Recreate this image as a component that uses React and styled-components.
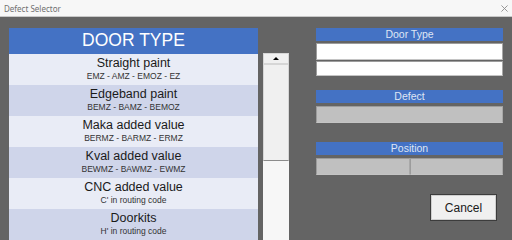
import styled, { createGlobalStyle } from "styled-components";

const GlobalStyle = createGlobalStyle`
  html, body {
    margin: 0;
    padding: 0;
    background: #646464;
    font-family: "Liberation Sans", Arial, sans-serif;
    overflow: hidden;
  }
`;

const doorTypes = [
  { name: "Straight paint", codes: "EMZ - AMZ - EMOZ - EZ" },
  { name: "Edgeband paint", codes: "BEMZ - BAMZ - BEMOZ" },
  { name: "Maka added value", codes: "BERMZ - BARMZ - ERMZ" },
  { name: "Kval added value", codes: "BEWMZ - BAWMZ - EWMZ" },
  { name: "CNC added value", codes: "C' in routing code" },
  { name: "Doorkits", codes: "H' in routing code" },
];

function App() {
  return (
    <>
      <GlobalStyle />
      <Window>
        <TitleBar>
          <span>Defect Selector</span>
          <CloseIcon viewBox="0 0 8 8">
            <path d="M0.5 0.5 L7.5 7.5 M7.5 0.5 L0.5 7.5" />
          </CloseIcon>
        </TitleBar>
        <Content>
          <List>
            <ListHeader>DOOR TYPE</ListHeader>
            {doorTypes.map((item, i) => (
              <ListRow key={item.name} $alt={i % 2 === 1}>
                <RowTitle>{item.name}</RowTitle>
                <RowCodes>{item.codes}</RowCodes>
              </ListRow>
            ))}
          </List>
          <ScrollBar>
            <ScrollButton>
              <Arrow />
            </ScrollButton>
            <ScrollThumb />
            <ScrollTrack />
          </ScrollBar>
          <SidePanel>
            <Field>
              <FieldHeader>Door Type</FieldHeader>
              <InputBox />
              <InputBox $tight />
            </Field>
            <Field>
              <FieldHeader>Defect</FieldHeader>
              <InputBox $disabled $spaced />
            </Field>
            <Field>
              <FieldHeader>Position</FieldHeader>
              <SplitRow>
                <InputBox $disabled $spaced />
                <InputBox $disabled $spaced />
              </SplitRow>
            </Field>
            <CancelButton>Cancel</CancelButton>
          </SidePanel>
        </Content>
      </Window>
    </>
  );
}

export default App;

const Window = styled.div`
  width: 512px;
  height: 240px;
  display: flex;
  flex-direction: column;
  overflow: hidden;
`;

const TitleBar = styled.div`
  height: 16px;
  flex-shrink: 0;
  background: #f7f7f7;
  border-bottom: 1px solid #c8c8c8;
  display: flex;
  align-items: center;
  justify-content: space-between;
  padding: 0 4px 0 4px;
  span {
    font-family: "Noto Sans", "Liberation Sans", sans-serif;
    font-size: 8px;
    color: #707070;
  }
`;

const CloseIcon = styled.svg`
  width: 7px;
  height: 7px;
  path {
    stroke: #8a8a8a;
    stroke-width: 1;
    fill: none;
  }
`;

const Content = styled.div`
  flex: 1;
  display: flex;
  align-items: flex-start;
  padding: 11px 0 0 9px;
`;

const List = styled.div`
  width: 249px;
  display: flex;
  flex-direction: column;
  flex-shrink: 0;
`;

const ListHeader = styled.div`
  height: 26px;
  background: #4472c4;
  color: #ffffff;
  font-size: 17.5px;
  line-height: 25px;
  text-align: center;
`;

const ListRow = styled.div`
  height: 31px;
  box-sizing: border-box;
  padding-top: 2px;
  background: ${(p) => (p.$alt ? "#cfd5ea" : "#e9ecf6")};
  text-align: center;
  color: #1a1a1a;
`;

const RowTitle = styled.div`
  font-size: 12.5px;
  line-height: 14px;
`;

const RowCodes = styled.div`
  font-size: 8.5px;
  line-height: 12px;
  color: #333333;
`;

const ScrollBar = styled.div`
  width: 26px;
  margin-left: 5px;
  margin-top: 25px;
  display: flex;
  flex-direction: column;
  flex-shrink: 0;
`;

const ScrollButton = styled.div`
  height: 11px;
  box-sizing: border-box;
  background: #f0f0f0;
  border: 1px solid #d6d6d6;
  display: flex;
  align-items: center;
  justify-content: center;
`;

const Arrow = styled.div`
  width: 0;
  height: 0;
  border-left: 3px solid transparent;
  border-right: 3px solid transparent;
  border-bottom: 3px solid #000000;
`;

const ScrollThumb = styled.div`
  height: 97px;
  box-sizing: border-box;
  background: #f0f0f0;
  border: 1px solid #d6d6d6;
  border-bottom: 1px solid #8c8c8c;
`;

const ScrollTrack = styled.div`
  height: 90px;
  background: #f7f7f7;
`;

const SidePanel = styled.div`
  width: 187px;
  margin-left: 27px;
  display: flex;
  flex-direction: column;
`;

const Field = styled.div`
  display: flex;
  flex-direction: column;
  margin-bottom: 14px;
  &:nth-child(2) {
    margin-bottom: 19px;
  }
`;

const FieldHeader = styled.div`
  height: 13px;
  background: #4472c4;
  color: #dfe6f4;
  font-size: 10.5px;
  line-height: 13px;
  text-align: center;
  margin-bottom: 2px;
`;

const InputBox = styled.div`
  flex: 1 1 auto;
  height: ${(p) => (p.$tight ? "15px" : "17px")};
  box-sizing: border-box;
  margin-top: ${(p) => (p.$tight || p.$spaced ? "1px" : "0")};
  background: ${(p) => (p.$disabled ? "#c0c0c0" : "#ffffff")};
  border: 1px solid #9c9c9c;
  border-right-color: #a8a8a8;
  border-bottom-color: #c4c4c4;
`;

const SplitRow = styled.div`
  display: flex;
`;

const CancelButton = styled.button`
  align-self: flex-end;
  margin-right: 6px;
  margin-top: 5px;
  width: 67px;
  height: 27px;
  box-sizing: border-box;
  background: #f0f0f0;
  border: 1px solid #3c3c3c;
  box-shadow: inset 0 0 0 1px #cfcfcf;
  font-family: "Liberation Sans", Arial, sans-serif;
  font-size: 12px;
  color: #1a1a1a;
  padding: 0;
`;
